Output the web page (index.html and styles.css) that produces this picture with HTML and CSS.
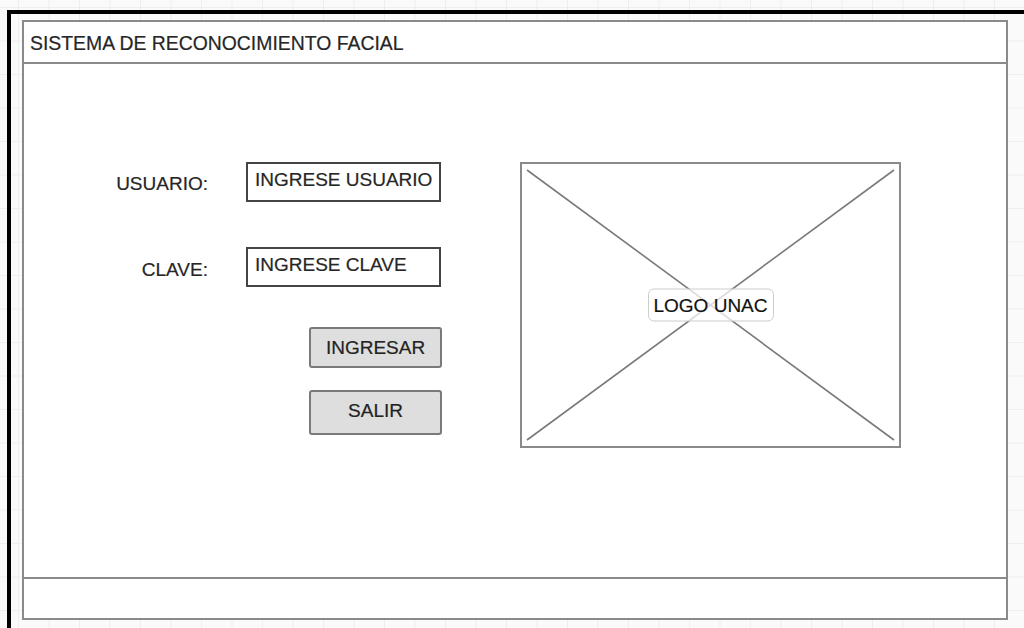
FILE: index.html
```html
<!DOCTYPE html>
<html lang="es">
<head>
<meta charset="utf-8">
<title>Sistema de Reconocimiento Facial</title>
<link rel="stylesheet" href="styles.css">
</head>
<body>
<div class="canvas">
  <div class="window">
    <header class="win-header">SISTEMA DE RECONOCIMIENTO FACIAL</header>
    <main class="win-body">
      <form class="login">
        <label class="label">USUARIO:</label>
        <div class="input">INGRESE USUARIO</div>
        <label class="label row2">CLAVE:</label>
        <div class="input row2">INGRESE CLAVE</div>
        <div class="btn btn-ingresar">INGRESAR</div>
        <div class="btn btn-salir">SALIR</div>
      </form>
      <div class="logo-box">
        <svg class="cross" viewBox="0 0 377 282" preserveAspectRatio="none">
          <line x1="5" y1="6" x2="372" y2="276"/>
          <line x1="5" y1="276" x2="372" y2="6"/>
        </svg>
        <span class="logo-label">LOGO UNAC</span>
      </div>
    </main>
    <footer class="win-footer"></footer>
  </div>
</div>
</body>
</html>
```
FILE: styles.css
```css
html, body {
  margin: 0;
  padding: 0;
  height: 100%;
  overflow: hidden;
}
body {
  font-family: "Liberation Sans", Arial, sans-serif;
  font-size: 19px;
  color: #262626;
  -webkit-text-stroke: 0.2px #262626;
  background-color: #fafafa;
  background-image:
    linear-gradient(to right, #eeeeee 1px, transparent 1px),
    linear-gradient(to bottom, #eeeeee 1px, transparent 1px);
  background-size: 30.5px 33.5px;
  background-position: 18px 7px;
}
.canvas {
  margin: 10px 0 0 7px;
  border-top: 4px solid #000;
  border-left: 4px solid #000;
  padding: 6px 0 0 11px;
  height: 618px;
  box-sizing: border-box;
}
.window {
  box-sizing: border-box;
  width: 986px;
  height: 600px;
  border: 2px solid #8a8a8a;
  background: #fff;
  display: flex;
  flex-direction: column;
}
.win-header {
  box-sizing: border-box;
  height: 42px;
  border-bottom: 2px solid #8a8a8a;
  display: flex;
  align-items: center;
  padding-left: 6px;
  padding-top: 1px;
  line-height: 22px;
  font-size: 19.4px;
}
.win-body {
  flex: 1;
  display: flex;
  align-items: flex-start;
  padding-top: 98px;
}
.win-footer {
  height: 41px;
  box-sizing: border-box;
  border-top: 2px solid #8a8a8a;
}
.login {
  display: grid;
  grid-template-columns: 184px 195px;
  column-gap: 38px;
  align-items: start;
}
.label {
  text-align: right;
  line-height: 22px;
  padding-top: 11px;
}
.label.row2 {
  margin-top: 45px;
  padding-top: 12px;
}
.input {
  box-sizing: border-box;
  height: 40px;
  border: 2px solid #444;
  padding: 5px 7px;
  line-height: 22px;
  white-space: nowrap;
}
.input.row2 {
  margin-top: 45px;
}
.btn {
  grid-column: 2;
  box-sizing: border-box;
  width: 133px;
  margin-left: 63px;
  background: #dedede;
  border: 2px solid #7a7a7a;
  border-radius: 3px;
  display: flex;
  align-items: center;
  justify-content: center;
  line-height: 22px;
  color: #222;
}
.btn-ingresar {
  height: 41px;
  margin-top: 40px;
}
.btn-salir {
  height: 45px;
  margin-top: 22px;
  padding-bottom: 3px;
}
.logo-box {
  position: relative;
  box-sizing: border-box;
  width: 381px;
  height: 286px;
  margin-left: 79px;
  border: 2px solid #8a8a8a;
}
.cross {
  display: block;
  width: 100%;
  height: 100%;
}
.cross line {
  stroke: #7a7a7a;
  stroke-width: 1.6;
}
.logo-label {
  position: absolute;
  left: 50%;
  top: 50%;
  transform: translate(-50%, -50%);
  box-sizing: border-box;
  height: 33px;
  padding: 0 5px;
  line-height: 31px;
  border: 1px solid #cccccc;
  border-radius: 6px;
  background: rgba(255, 255, 255, 0.72);
  color: #111;
  -webkit-text-stroke: 0.2px #111;
  white-space: nowrap;
}
```
